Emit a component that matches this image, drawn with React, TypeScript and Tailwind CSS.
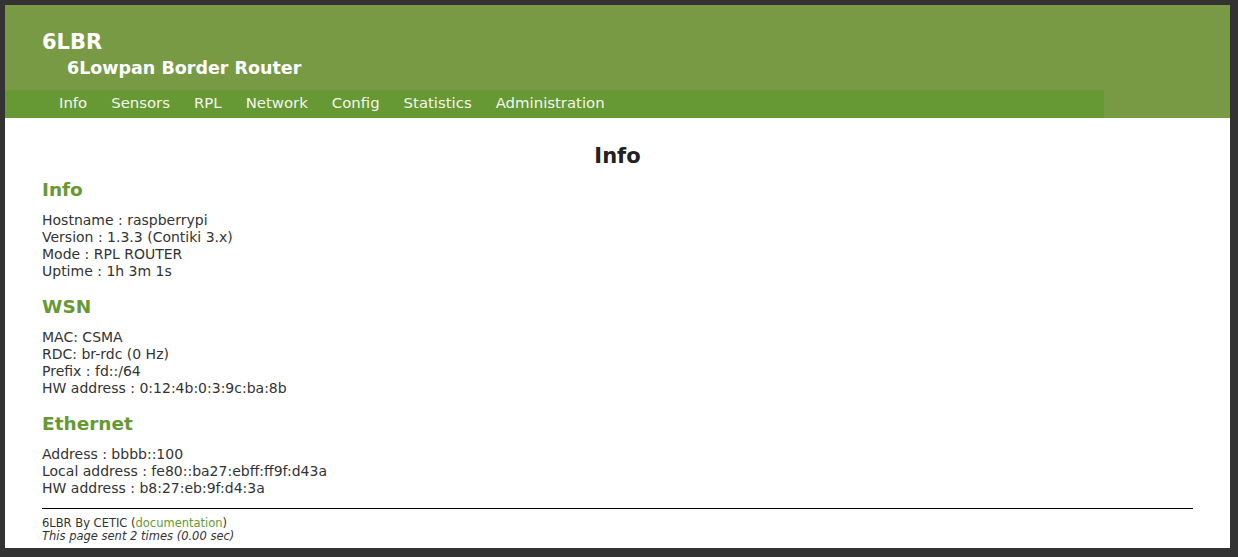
import React from "react";

const font = { fontFamily: '"DejaVu Sans", Verdana, sans-serif' };

const navItems = ["Info", "Sensors", "RPL", "Network", "Config", "Statistics", "Administration"];

function Section({ title, lines }: { title: string; lines: string[] }) {
  return (
    <div className="mb-[15px]">
      <h2 className="text-[18.5px] leading-[24px] font-bold text-[#669933] mb-[10px]">{title}</h2>
      <div className="text-[14px] leading-[17px] text-[#333333]">
        {lines.map((l) => (
          <div key={l}>{l}</div>
        ))}
      </div>
    </div>
  );
}

export default function App() {
  return (
    <div className="w-[1238px] h-[557px] bg-[#333333] pt-[5px] pl-[5px] pr-[8px] pb-[9px]" style={font}>
      <div className="w-full h-full bg-white flex flex-col">
        <header className="bg-[#799a45] h-[113px] flex flex-col">
          <div className="h-[85px] pl-[37px] pt-[24px] text-white">
            <div className="text-[21px] leading-[26px] font-bold">6LBR</div>
            <div className="text-[17.5px] leading-[24px] font-bold pl-[25px] mt-[1px]">6Lowpan Border Router</div>
          </div>
          <nav className="bg-[#669933] h-[28px] w-[1099px] flex items-center pl-[42px] pb-[1px]">
            {navItems.map((n) => (
              <span key={n} className="px-[12px] text-[14.9px] text-[#f4f6ec]">
                {n}
              </span>
            ))}
          </nav>
        </header>
        <main className="px-[37px] pt-[25px] flex-1 flex flex-col">
          <h1 className="text-center text-[21px] leading-[26px] font-bold text-[#222222] mb-[9px]">Info</h1>
          <Section
            title="Info"
            lines={["Hostname : raspberrypi", "Version : 1.3.3 (Contiki 3.x)", "Mode : RPL ROUTER", "Uptime : 1h 3m 1s"]}
          />
          <Section
            title="WSN"
            lines={["MAC: CSMA", "RDC: br-rdc (0 Hz)", "Prefix : fd::/64", "HW address : 0:12:4b:0:3:9c:ba:8b"]}
          />
          <Section
            title="Ethernet"
            lines={["Address : bbbb::100", "Local address : fe80::ba27:ebff:ff9f:d43a", "HW address : b8:27:eb:9f:d4:3a"]}
          />
          <div className="border-t border-black mt-[-4px] pt-[8px] text-[11.5px] leading-[13px] text-[#333333]">
            <div>
              6LBR By CETIC (<span className="text-[#669933]">documentation</span>)
            </div>
            <div className="italic">This page sent 2 times (0.00 sec)</div>
          </div>
        </main>
      </div>
    </div>
  );
}
